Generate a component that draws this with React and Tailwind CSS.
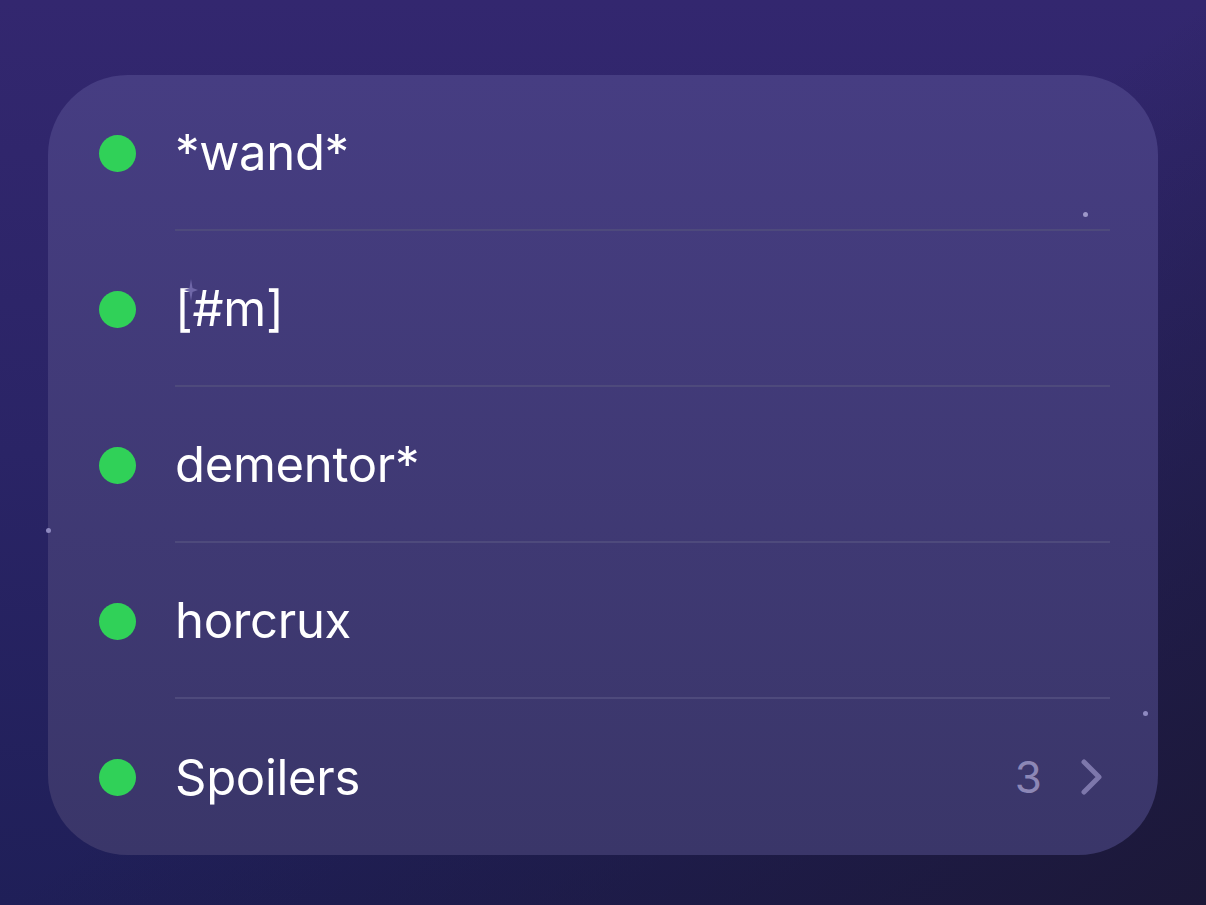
import React from "react";

const rows = ["*wand*", "[#m]", "dementor*", "horcrux"];

const Row = ({ label, last, children }) => (
  <div className="flex h-[156px] items-stretch">
    <div className="flex w-[127px] shrink-0 items-center pl-[51px]">
      <div className="h-[37px] w-[37px] rounded-full bg-[#30d158]" />
    </div>
    <div
      className={
        "flex flex-1 items-center mr-[48px] " +
        (last ? "" : "border-b-2 border-[#4e4a7c]")
      }
    >
      <span className="text-[49px] leading-none text-white tracking-[-0.3px]">{label}</span>
      {children}
    </div>
  </div>
);

export default function App() {
  return (
    <div
      className="relative h-[905px] w-[1206px] overflow-hidden bg-gradient-to-b from-[#33276f] via-[#2a2466] to-[#1f1f58] pt-[75px] pl-[48px]"
      style={{ fontFamily: "Inter, 'Noto Sans', sans-serif" }}
    >
      <div className="pointer-events-none absolute inset-0 bg-gradient-to-tl from-[#1c1838] via-transparent to-transparent" />

      <div className="relative w-[1110px] h-[780px] rounded-[80px] bg-gradient-to-b from-[#463d82] to-[#3a3669] overflow-hidden">
        <svg className="absolute left-[136px] top-[204px]" width="14" height="22" viewBox="0 0 14 22">
          <path d="M7 0 L8.5 9 L14 11 L8.5 13 L7 22 L5.5 13 L0 11 L5.5 9 Z" fill="#6f67a8" />
        </svg>
        {rows.map((r) => (
          <Row key={r} label={r} />
        ))}
        <Row label="Spoilers" last>
          <div className="ml-auto flex items-center gap-[38px] pr-[6px]">
            <span className="text-[44px] leading-none text-[#8c87b6]">3</span>
            <svg width="24" height="38" viewBox="0 0 24 38">
              <path d="M4 4 L19 19 L4 34" fill="none" stroke="#7d77ab" strokeWidth="5" strokeLinecap="round" strokeLinejoin="round" />
            </svg>
          </div>
        </Row>
      </div>

      {/* stray star dots */}
      <div className="absolute left-[1083px] top-[212px] h-[5px] w-[5px] rounded-full bg-[#9d97c9]" />
      <div className="absolute left-[46px] top-[528px] h-[5px] w-[5px] rounded-full bg-[#8e89c0]" />
      <div className="absolute left-[1143px] top-[711px] h-[5px] w-[5px] rounded-full bg-[#8e89c0]" />
    </div>
  );
}
